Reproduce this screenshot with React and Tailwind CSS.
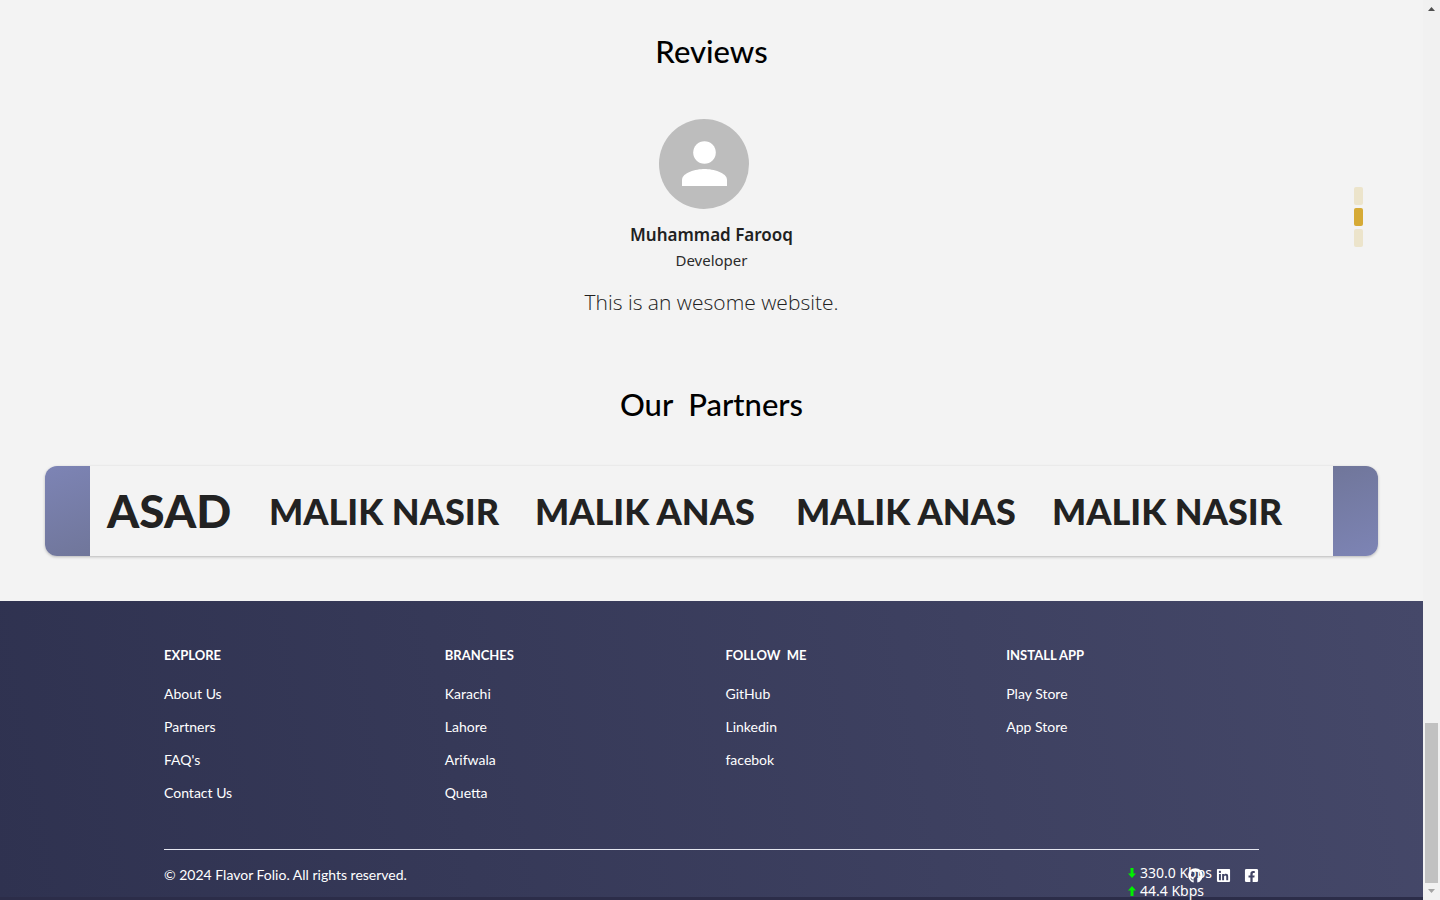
import { FaGithub, FaLinkedin, FaFacebookSquare } from "react-icons/fa";

const columns = [
  { title: "EXPLORE", links: ["About Us", "Partners", "FAQ's", "Contact Us"] },
  { title: "BRANCHES", links: ["Karachi", "Lahore", "Arifwala", "Quetta"] },
  { title: "FOLLOW  ME", links: ["GitHub", "Linkedin", "facebok"] },
  { title: "INSTALL APP", links: ["Play Store", "App Store"] },
];

const socials = [
  { label: "GitHub", Icon: FaGithub },
  { label: "Linkedin", Icon: FaLinkedin },
  { label: "Facebook", Icon: FaFacebookSquare },
];

function Reviews() {
  return (
    <section className="relative flex flex-col items-center pt-[27px]">
      <h2 className="whitespace-pre text-[31px] leading-12 font-medium text-black">Reviews</h2>
      <div className="mt-11 mr-[15px] size-[90px] overflow-hidden rounded-full bg-[#bdbdbd]">
        <svg viewBox="0 0 90 90" className="size-full" fill="white" aria-hidden="true">
          <circle cx="45.500" cy="33.500" r="11.300" />
          <path d="M23 67v-6c0-7.500 14-11 22.500-11s22.500 3.500 22.500 11v6z" />
        </svg>
      </div>
      <p className="mt-[13px] font-['Noto_Sans','Open_Sans',sans-serif] text-[17px] leading-[26px] font-semibold text-[#212121]">Muhammad Farooq</p>
      <p className="font-['Noto_Sans','Open_Sans',sans-serif] text-[15px] leading-6 font-normal text-[#2b2b2b]">Developer</p>
      <p className="mt-3 font-['Open_Sans',sans-serif] text-[21px] leading-9 font-light text-[#212121]">This is an wesome website.</p>
      <div className="absolute top-[187px] right-[60px] flex flex-col gap-[3px]">
        <button type="button" aria-label="Review 1" className="h-[18px] w-[9px] rounded-xs bg-[#ece4cb]" />
        <button type="button" aria-label="Review 2" className="h-[18px] w-[9px] rounded-xs bg-[#d6aa35]" />
        <button type="button" aria-label="Review 3" className="h-[18px] w-[9px] rounded-xs bg-[#ece4cb]" />
      </div>
    </section>
  );
}

function Partners() {
  return (
    <section className="px-[45px] pt-[60px] pb-[45px]">
      <h2 className="text-center whitespace-pre text-[31px] leading-12 font-medium text-black">Our  Partners</h2>
      <div className="mt-[38px] flex h-[90px] overflow-hidden rounded-xl shadow-[0_1px_3px_rgba(0,0,0,0.25)]">
        <div className="w-[45px] shrink-0 bg-linear-160 from-[#7d84b5] to-[#70769a]" />
        <ul className="flex flex-1 items-center pl-[17px] font-[Lato,sans-serif] leading-none font-black whitespace-nowrap text-[#222]">
          <li className="w-[162px] text-[46px]">ASAD</li>
          <li className="w-[266px] text-[36px]">MALIK NASIR</li>
          <li className="w-[261px] text-[36px]">MALIK ANAS</li>
          <li className="w-[256px] text-[36px]">MALIK ANAS</li>
          <li className="text-[36px]">MALIK NASIR</li>
        </ul>
        <div className="w-[45px] shrink-0 bg-linear-160 from-[#70769a] to-[#7d84b5]" />
      </div>
    </section>
  );
}

function NetworkSpeed() {
  return (
    <div className="absolute top-[263px] right-[211px] grid grid-cols-[auto_auto] items-center gap-x-1 font-['Noto_Sans','Open_Sans',sans-serif] text-[14px] leading-[18px] text-white">
      <svg viewBox="0 0 8 10" className="h-[10px] w-2" fill="#00f000" aria-hidden="true"><path d="M2.500 0h3v5.500H8L4 10 0 5.500h2.500z" /></svg>
      <span>330.0 Kbps</span>
      <svg viewBox="0 0 8 10" className="h-[10px] w-2" fill="#00f000" aria-hidden="true"><path d="M2.500 10h3V4.500H8L4 0 0 4.500h2.500z" /></svg>
      <span>44.4 Kbps</span>
    </div>
  );
}

function Footer() {
  return (
    <footer className="relative flex-1 border-b-3 border-[#2c2d49] bg-linear-80 from-[#2f3250] to-[#454869] px-[164px] pt-11 text-[14px] text-white">
      <nav className="grid h-[204px] grid-cols-4 items-start gap-7">
        {columns.map((column) => (
          <div key={column.title}>
            <h3 className="whitespace-pre text-[13px] leading-5 font-bold">{column.title}</h3>
            <ul className="mt-[13px] flex flex-col">
              {column.links.map((link) => (
                <li key={link} className="h-[33px] leading-8"><a href="#">{link}</a></li>
              ))}
            </ul>
          </div>
        ))}
      </nav>
      <div className="flex items-center justify-between border-t border-[#e5e7f0] pt-[15px]">
        <p className="leading-5">© 2024 Flavor Folio. All rights reserved.</p>
        <div className="flex gap-[13px]">
          {socials.map(({ label, Icon }) => (
            <a key={label} href="#" aria-label={label}><Icon size={15} /></a>
          ))}
        </div>
      </div>
      <NetworkSpeed />
    </footer>
  );
}

function ScrollRail() {
  return (
    <div aria-hidden="true" className="flex w-[17px] shrink-0 flex-col items-center justify-between bg-[#f1f1f1] py-[7px]">
      <svg viewBox="0 0 7 4" className="h-1 w-[7px]" fill="#505050"><path d="M3.500 0L7 4H0z" /></svg>
      <div className="flex flex-col items-center gap-[6px]">
        <div className="h-[160px] w-[13px] bg-[#c1c1c1]" />
        <svg viewBox="0 0 7 4" className="h-1 w-[7px]" fill="#a3a3a3"><path d="M0 0h7L3.500 4z" /></svg>
      </div>
    </div>
  );
}

export default function App() {
  return (
    <div className="flex min-h-screen bg-[#f3f3f3] font-['Lato',sans-serif]">
      <main className="flex min-w-0 flex-1 flex-col">
        <Reviews />
        <Partners />
        <Footer />
      </main>
      <ScrollRail />
    </div>
  );
}
